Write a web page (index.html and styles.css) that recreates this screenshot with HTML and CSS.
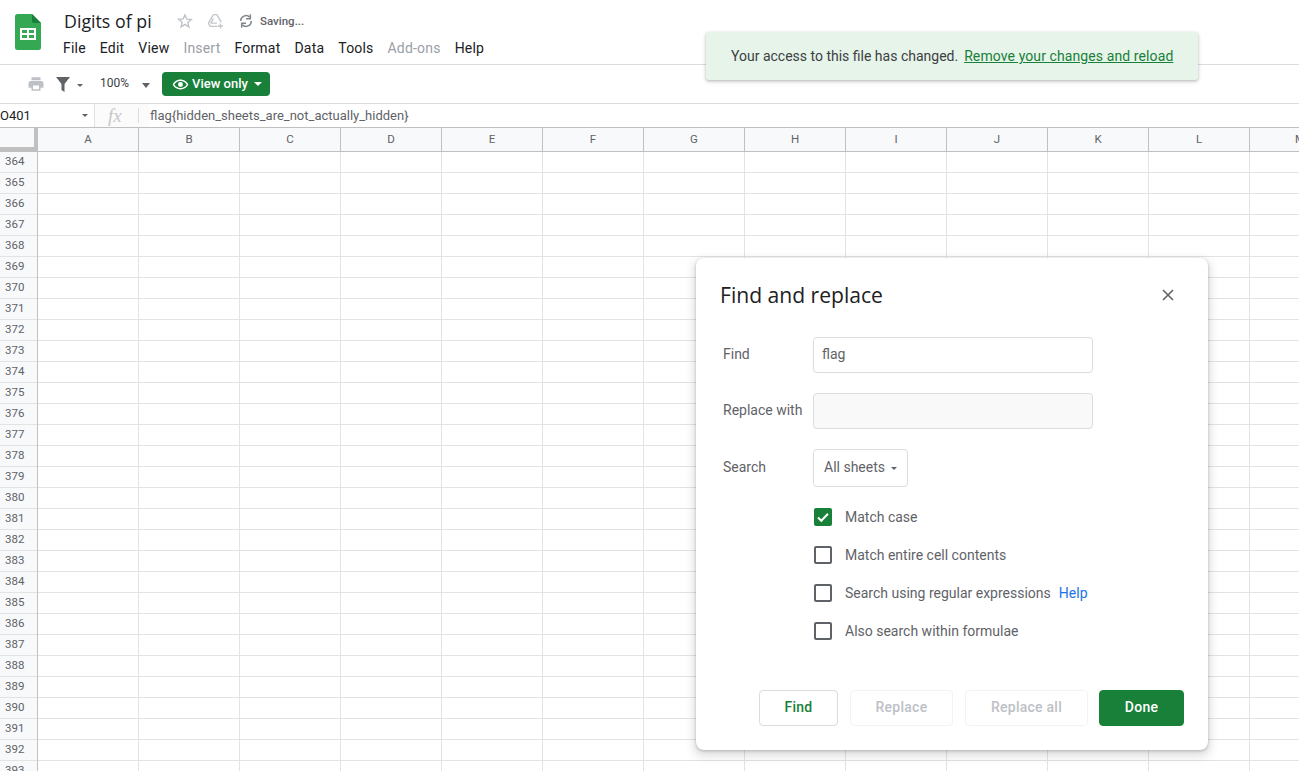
FILE: index.html
```html
<!DOCTYPE html>
<html lang="en">
<head>
<meta charset="utf-8">
<title>Digits of pi</title>
<link rel="stylesheet" href="styles.css">
</head>
<body>
<div class="app">
  <header class="top">
    <svg class="logo" width="26" height="36" viewBox="0 0 26 36"><path d="M2.500 0H17l9 9v24.500a2.500 2.500 0 0 1-2.500 2.500h-21A2.500 2.500 0 0 1 0 33.500v-31A2.500 2.500 0 0 1 2.500 0z" fill="#34a853"/><path d="M17 0l9 9h-7a2 2 0 0 1-2-2z" fill="#188038"/><path d="M5 14h16v12H5z" fill="#fff"/><path d="M7 16h5v3H7zM14 16h5v3h-5zM7 21h5v3H7zM14 21h5v3h-5z" fill="#34a853"/></svg>
    <div class="titles">
      <div class="title-row">
        <span class="doc-title">Digits of pi</span>
        <svg class="star" width="16" height="16" viewBox="0 0 24 24"><path d="M12 3l2.700 6.300 6.800.6-5.200 4.500 1.600 6.700L12 17l-5.900 3.600 1.600-6.700-5.200-4.500 6.800-.6z" fill="none" stroke="#bdc1c6" stroke-width="2"/></svg>
        <svg class="drive" width="17" height="16" viewBox="0 0 24 22"><path d="M9 2h5l6 10.500M9 2L2 14l2.500 4.500H15M9 7.500L5.500 14H14" fill="none" stroke="#c4c7ca" stroke-width="1.900" stroke-linejoin="round"/><path d="M19 14.500v7M15.500 18h7" stroke="#c4c7ca" stroke-width="1.900"/></svg>
        <svg class="sync" width="16" height="16" viewBox="0 0 24 24"><path d="M20 12a8 8 0 0 1-13.500 5.800M4 12a8 8 0 0 1 13.500-5.800" fill="none" stroke="#80868b" stroke-width="2.200"/><path d="M18.500 2v6.500H12M5.500 22v-6.500H12" fill="none" stroke="#80868b" stroke-width="2.200"/></svg>
        <span class="saving">Saving...</span>
      </div>
      <nav class="menu">
        <span>File</span><span>Edit</span><span>View</span><span class="off">Insert</span><span>Format</span><span>Data</span><span>Tools</span><span class="off">Add-ons</span><span>Help</span>
      </nav>
    </div>
  </header>

  <div class="toolbar">
    <svg width="18" height="18" viewBox="0 0 24 24"><path d="M19 8H5a3 3 0 0 0-3 3v6h4v4h12v-4h4v-6a3 3 0 0 0-3-3zm-3 11H8v-5h8zM18 3H6v4h12z" fill="#bdc1c6"/></svg>
    <svg class="t-filter" width="14" height="15" viewBox="0 0 14 15"><path d="M0 0h14L8.500 7v8l-3-2V7z" fill="#5f6368"/></svg>
    <i class="caret small t-c1"></i>
    <span class="zoom">100%</span>
    <i class="caret wide t-c2"></i>
    <button class="view-only">
      <svg width="17" height="17" viewBox="0 0 24 24"><path d="M12 5C7 5 2.700 8.100 1 12c1.700 3.900 6 7 11 7s9.300-3.100 11-7c-1.700-3.900-6-7-11-7zm0 12c-3.800 0-7.200-2.200-8.800-5 1.600-2.800 5-5 8.800-5s7.200 2.200 8.800 5c-1.600 2.800-5 5-8.800 5zm0-8.500a3.500 3.500 0 1 0 0 7 3.500 3.500 0 0 0 0-7z" fill="#fff"/></svg>
      <span>View only</span>
      <i class="caret white"></i>
    </button>
  </div>

  <div class="formula">
    <div class="namebox"><span>O401</span><i class="caret small"></i></div>
    <div class="fx-box"><span class="fx">fx</span></div>
    <div class="formula-text">flag{hidden_sheets_are_not_actually_hidden}</div>
  </div>

  <div class="col-heads">
    <div class="corner"></div>
    <div class="col">A</div><div class="col">B</div><div class="col">C</div><div class="col">D</div><div class="col">E</div><div class="col">F</div><div class="col">G</div><div class="col">H</div><div class="col">I</div><div class="col">J</div><div class="col">K</div><div class="col">L</div><div class="col">M</div>
  </div>

  <div class="sheet">
    <div class="row-heads">
      <div>364</div><div>365</div><div>366</div><div>367</div><div>368</div><div>369</div><div>370</div><div>371</div><div>372</div><div>373</div><div>374</div><div>375</div><div>376</div><div>377</div><div>378</div><div>379</div><div>380</div><div>381</div><div>382</div><div>383</div><div>384</div><div>385</div><div>386</div><div>387</div><div>388</div><div>389</div><div>390</div><div>391</div><div>392</div><div>393</div>
    </div>
    <div class="cells"></div>
  </div>
</div>

<div class="toast">
  <span>Your access to this file has changed.</span>
  <a class="toast-link">Remove your changes and reload</a>
</div>

<section class="dialog">
  <div class="dialog-head">
    <h1>Find and replace</h1>
    <svg width="14" height="14" viewBox="0 0 14 14"><path d="M2 2l10 10M12 2L2 12" stroke="#5f6368" stroke-width="1.600" fill="none"/></svg>
  </div>
  <div class="field"><label>Find</label><div class="input">flag</div></div>
  <div class="field"><label>Replace with</label><div class="input disabled"></div></div>
  <div class="field tall"><label>Search</label><div class="select"><span>All sheets</span><i class="caret small"></i></div></div>
  <div class="checks">
    <div class="check"><span class="box on"><svg width="18" height="18" viewBox="0 0 18 18"><path d="M4 9.500l3.300 3.300L14 5.800" fill="none" stroke="#fff" stroke-width="2"/></svg></span><span>Match case</span></div>
    <div class="check"><span class="box"></span><span>Match entire cell contents</span></div>
    <div class="check"><span class="box"></span><span>Search using regular expressions</span><a class="help">Help</a></div>
    <div class="check"><span class="box"></span><span>Also search within formulae</span></div>
  </div>
  <div class="actions">
    <button class="btn find">Find</button>
    <button class="btn dim replace">Replace</button>
    <button class="btn dim replace-all">Replace all</button>
    <button class="btn done">Done</button>
  </div>
</section>
</body>
</html>
```
FILE: styles.css
```css
* { box-sizing: border-box; }
html, body { margin: 0; height: 100%; overflow: hidden; background: #fff; }
body { font-family: Roboto, "Liberation Sans", sans-serif; color: #3c4043; position: relative; }
.app { width: 1299px; height: 771px; display: flex; flex-direction: column; overflow: hidden; }

.top { height: 65px; display: flex; padding: 14px 0 0 15px; border-bottom: 1px solid #dadce0; flex: none; }
.titles { margin-left: 22px; margin-top: -7px; }
.title-row { display: flex; align-items: center; height: 27px; }
.doc-title { font-family: "Open Sans", sans-serif; font-size: 17.800px; color: #202124; width: 114px; padding-left: 1px; }
.drive { margin-left: 14px; }
.sync { margin-left: 14px; }
.saving { font-size: 11.500px; font-weight: 500; color: #5f6368; margin-left: 6px; }
.menu { display: flex; gap: 14px; font-size: 14px; color: #202124; margin-top: 4px; line-height: 20px; letter-spacing: .2px; }
.menu .off { color: #9aa0a6; }

.toolbar { height: 39px; flex: none; display: flex; align-items: center; padding-left: 27px; border-bottom: 1px solid #dadce0; }
.t-filter { margin-left: 11px; }
.t-c1 { margin-left: 7px; margin-top: 3px; }
.zoom { font-size: 12px; margin-left: 17px; color: #3c4043; margin-top: -2px; width: 30px; }
.t-c2 { margin-left: 12px; margin-top: 2px; }
.caret { display: block; width: 0; height: 0; border: 4px solid transparent; border-top-color: #5f6368; border-bottom: 0; flex: none; }
.caret.wide { border-width: 5px 4.500px 0; border-bottom: 0; }
.caret.small { border-width: 3.500px 3.500px 0; border-bottom: 0; }
.caret.white { border-top-color: #fff; }
.view-only { margin-left: 12px; height: 24px; width: 108px; border: 0; border-radius: 4px; background: #188038; color: #fff; display: flex; align-items: center; padding: 0 0 2px 10px; font: 500 13px Roboto, sans-serif; }
.view-only svg { margin-top: 2px; }
.view-only span { margin-left: 3px; }
.view-only .caret { margin-left: 6px; margin-top: 2px; }

.formula { height: 23px; flex: none; display: flex; align-items: center; background: #fff; }
.namebox { width: 94px; display: flex; align-items: center; justify-content: space-between; font-size: 13px; color: #202124; padding-right: 6px; height: 23px; }
.fx-box { width: 55px; height: 23px; background: #fbfbfb; border-left: 1px solid #e0e0e0; position: relative; padding-left: 13px; display: flex; align-items: center; }
.fx-box::after { content: ""; position: absolute; left: 43px; top: 4px; height: 15px; width: 1px; background: #dadce0; }
.fx { font: italic 19px "Liberation Serif", serif; color: #c4c7ca; }
.formula-text { font-size: 13px; color: #5f6368; margin-left: 1px; }

.col-heads { height: 25px; flex: none; display: flex; background: #f8f9fa; border-top: 1px solid #c0c0c0; border-bottom: 1px solid #c0c0c0; }
.corner { width: 38px; flex: none; border-right: 4px solid #c0c0c0; border-bottom: 4px solid #c0c0c0; background: #f8f9fa; }
.col { width: 101px; flex: none; border-right: 1px solid #c0c0c0; text-align: center; font-size: 11.500px; line-height: 22px; color: #5f6368; }

.sheet { flex: 1; display: flex; min-height: 0; }
.row-heads { width: 38px; flex: none; background: #f8f9fa; border-right: 1px solid #c0c0c0; }
.row-heads div { height: 21px; line-height: 18px; font-size: 11.500px; color: #5f6368; padding-left: 5px; border-bottom: 1px solid #e2e3e3; }
.cells { flex: 1; background-image: repeating-linear-gradient(to right, transparent 0 100px, #e2e3e3 100px 101px), repeating-linear-gradient(to bottom, transparent 0 20px, #e2e3e3 20px 21px); }

.toast { position: absolute; left: 706px; top: 32px; width: 492px; height: 48px; background: #e6f4ea; border-radius: 3px; box-shadow: 0 1px 3px rgba(60,64,67,.3), 0 2px 5px rgba(60,64,67,.12); display: flex; align-items: center; padding-left: 25px; font-size: 14px; color: #3c4043; white-space: nowrap; }
.toast-link { color: #188038; text-decoration: underline; margin-left: 6px; letter-spacing: .1px; }

.dialog { position: absolute; left: 696px; top: 258px; width: 512px; height: 492px; background: #fff; border-radius: 8px; box-shadow: 0 1px 3px rgba(60,64,67,.3), 0 4px 8px 3px rgba(60,64,67,.15); padding: 24px; display: flex; flex-direction: column; }
.dialog-head { display: flex; justify-content: space-between; align-items: center; height: 26px; padding-right: 9px; margin-bottom: 29px; }
.dialog-head h1 { margin: 0; font: 400 21.100px "Open Sans", sans-serif; color: #202124; position: relative; top: -1px; }
.field { display: flex; align-items: center; height: 36px; margin-bottom: 20px; font-size: 14px; color: #5f6368; padding-left: 3px; }
.field.tall { height: 38px; }
.field label { width: 90px; flex: none; padding-bottom: 2px; }
.input { width: 280px; height: 36px; border: 1px solid #dadce0; border-radius: 4px; padding: 0 0 2px 8px; display: flex; align-items: center; color: #5f6368; }
.input.disabled { background: #f9f9f9; }
.select { width: 95px; height: 38px; border: 1px solid #dadce0; border-radius: 4px; display: flex; align-items: center; padding: 0 0 2px 10px; color: #5f6368; gap: 6px; }
.select .caret { margin-top: 2px; }
.checks { display: flex; flex-direction: column; gap: 20px; margin-top: 1px; padding-left: 94px; font-size: 14px; color: #5f6368; }
.check { display: flex; align-items: center; height: 18px; }
.box { width: 18px; height: 18px; border: 2px solid #5f6368; border-radius: 2px; margin-right: 13px; flex: none; }
.box.on { background: #188038; border: 0; }
.box svg { display: block; }
.help { color: #1a73e8; margin-left: 8px; }
.actions { margin-top: auto; display: flex; gap: 12px; justify-content: flex-end; }
.btn { height: 36px; border-radius: 4px; border: 1px solid #dadce0; background: #fff; font: 500 14px Roboto, sans-serif; letter-spacing: .25px; padding: 0 0 2px; }
.find { width: 79px; color: #188038; }
.dim { color: #bdc1c6; border-color: #f1f3f4; }
.replace { width: 103px; }
.replace-all { width: 123px; margin-right: -1px; }
.done { width: 85px; background: #188038; border-color: #188038; color: #fff; }
```
